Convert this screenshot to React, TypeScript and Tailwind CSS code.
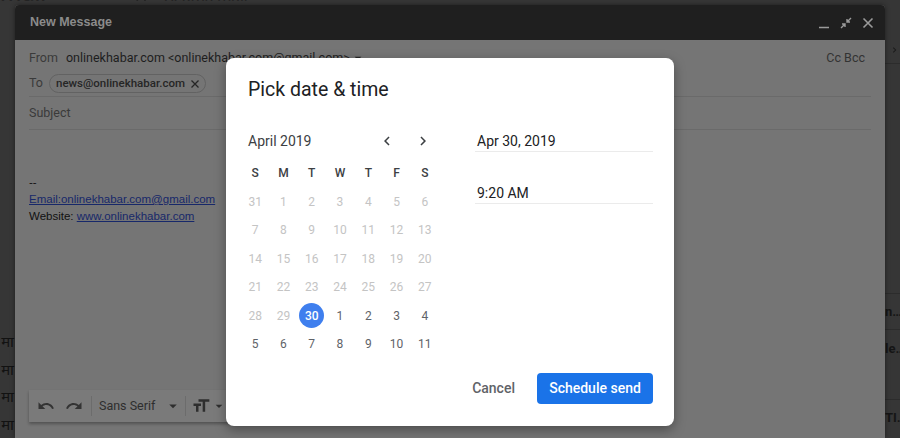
import React from "react";

const Chevron = ({ dir }: { dir: "left" | "right" }) => (
  <svg width="18" height="18" viewBox="0 0 24 24" fill="#3c4043">
    <path
      d={
        dir === "left"
          ? "M15.41 7.41L14 6l-6 6 6 6 1.41-1.41L10.83 12z"
          : "M8.59 16.59L10 18l6-6-6-6-1.41 1.41L13.17 12z"
      }
    />
  </svg>
);

const Caret = ({ size = 18, color = "#2e2e2e" }: { size?: number; color?: string }) => (
  <svg width={size} height={size} viewBox="0 0 24 24" fill={color}>
    <path d="M7 10l5 5 5-5z" />
  </svg>
);

type Day = { n: number; s: "off" | "on" | "sel" };

const rows: Day[][] = [
  [31, 1, 2, 3, 4, 5, 6].map((n) => ({ n, s: "off" as const })),
  [7, 8, 9, 10, 11, 12, 13].map((n) => ({ n, s: "off" as const })),
  [14, 15, 16, 17, 18, 19, 20].map((n) => ({ n, s: "off" as const })),
  [21, 22, 23, 24, 25, 26, 27].map((n) => ({ n, s: "off" as const })),
  [
    { n: 28, s: "off" },
    { n: 29, s: "off" },
    { n: 30, s: "sel" },
    { n: 1, s: "on" },
    { n: 2, s: "on" },
    { n: 3, s: "on" },
    { n: 4, s: "on" },
  ],
  [5, 6, 7, 8, 9, 10, 11].map((n) => ({ n, s: "on" as const })),
];

const weekdays = ["S", "M", "T", "W", "T", "F", "S"];

export default function App() {
  return (
    <div className="relative w-[900px] h-[438px] overflow-hidden bg-[#363636] font-['Roboto',sans-serif]">
      {/* Gmail page behind (dimmed) */}
      <div className="absolute inset-0 flex flex-col">
        <div className="h-[5px] flex items-end overflow-hidden text-[#242424]">
          <span className="ml-[-16px] text-[24px] leading-[24px] mb-[-4px]">Gmail</span>
          <svg className="ml-[88px] mb-[-9px]" width="18" height="18" viewBox="0 0 24 24" fill="#242424">
            <path d="M15.5 14h-.79l-.28-.27A6.471 6.471 0 0016 9.5 6.5 6.5 0 109.5 16c1.61 0 3.09-.59 4.23-1.57l.27.28v.79l5 4.99L20.49 19l-4.99-5zm-6 0C7.01 14 5 11.99 5 9.5S7.01 5 9.5 5 14 7.01 14 9.5 11.99 14 9.5 14z" />
          </svg>
          <span className="ml-[12px] text-[16px] leading-[16px] mb-[-5px]">Search mail</span>
        </div>
        <div className="flex-1 flex justify-between">
          <div className="w-[15px] flex flex-col overflow-hidden">
            <div className="h-[326px]" />
            {["मा", "मा", "मा", "मा"].map((t, i) => (
              <div key={i} className="h-[27.7px] flex items-center justify-end text-[15px] text-[#121212] font-['Noto_Sans','Noto_Sans_Devanagari',serif] whitespace-nowrap">
                <span className="mr-[1px]">{t}</span>
              </div>
            ))}
          </div>
          <div className="w-[15px] flex flex-col overflow-hidden text-[#151515] text-[13px] font-bold">
            <div className="h-[35px]" />
            <div className="h-[27px] flex items-center">
              <svg width="12" height="12" viewBox="0 0 24 24" fill="#1a1a1a" className="ml-[4px]">
                <path d="M8.59 16.59L10 18l6-6-6-6-1.41 1.41L13.17 12z" />
              </svg>
            </div>
            <div className="h-[230px] border-t border-[#2c2c2c]" />
            <div className="h-[36px] border-t border-[#2c2c2c] flex items-center whitespace-nowrap">n…</div>
            <div className="h-[70px] border-t border-[#2c2c2c] whitespace-nowrap">
              <div className="h-[36px] flex items-center">le…</div>
            </div>
            <div className="flex-1 border-t border-[#2c2c2c] whitespace-nowrap">
              <div className="h-[34px] flex items-center">TI…</div>
            </div>
          </div>
        </div>
      </div>

      {/* Compose window */}
      <div className="absolute left-[15px] top-[5px] w-[870px] h-[433px] flex flex-col bg-[#757575] rounded-t-[4px] shadow-[0_0_5px_rgba(0,0,0,0.45)] overflow-hidden">
        <div className="h-[35px] bg-[#1f1f1f] flex items-center justify-between pl-[15px] pr-[10px]">
          <span className="text-[12.5px] font-bold text-[#8b8b8b] font-['Liberation_Sans',sans-serif]">New Message</span>
          <div className="flex items-center gap-[8px]">
            <svg width="14" height="14" viewBox="0 0 14 14" stroke="#9a9a9a" strokeWidth="1.6">
              <path d="M2 11.5h10" />
            </svg>
            <svg width="14" height="14" viewBox="0 0 14 14" stroke="#9a9a9a" strokeWidth="1.4" fill="none">
              <path d="M12 2L8 6M8 3v3h3M2 12l4-4M3 8h3v3" />
            </svg>
            <svg width="14" height="14" viewBox="0 0 14 14" stroke="#9a9a9a" strokeWidth="1.6">
              <path d="M2.5 2.5l9 9M11.5 2.5l-9 9" />
            </svg>
          </div>
        </div>
        <div className="flex-1 flex flex-col pt-[5px]">
          <div className="h-[26px] flex items-center px-[14px] text-[12.5px]">
            <span className="text-[#3a3a3a]">From</span>
            <span className="ml-[8px] text-[#1e1e1e]">onlinekhabar.com &lt;onlinekhabar.com@gmail.com&gt;</span>
            <Caret size={16} color="#262626" />
            <span className="ml-auto mr-[6px] text-[#333]">Cc Bcc</span>
          </div>
          <div className="h-[26px] mx-[14px] flex items-center border-b border-[#6a6a6a]">
            <span className="text-[12.5px] text-[#3a3a3a]">To</span>
            <span className="ml-[6px] h-[19px] flex items-center rounded-full border border-[#626262] pl-[6px] pr-[4px] text-[11.5px] font-medium text-[#262626]">
              news@onlinekhabar.com
              <svg className="ml-[4px]" width="12" height="12" viewBox="0 0 12 12" stroke="#262626" strokeWidth="1.3">
                <path d="M2.5 2.5l7 7M9.5 2.5l-7 7" />
              </svg>
            </span>
          </div>
          <div className="h-[33px] mx-[14px] flex items-center border-b border-[#6a6a6a] text-[12.5px] text-[#3a3a3a]">
            Subject
          </div>
          <div className="mt-[44px] px-[14px] font-['Liberation_Sans',sans-serif] text-[11.5px] leading-[17px] text-[#111]">
            <div>--</div>
            <div className="text-[#17286a] underline">Email:onlinekhabar.com@gmail.com</div>
            <div>
              Website: <span className="text-[#17286a] underline">www.onlinekhabar.com</span>
            </div>
          </div>
          <div className="flex-1" />
          <div className="mb-[16px] ml-[14px] w-[430px] h-[32px] bg-[#7a7a7a] shadow-[0_2px_3px_rgba(0,0,0,0.3)] flex items-center pl-[3px] text-[#2e2e2e]">
            <button className="w-[28px] h-[28px] flex items-center justify-center">
              <svg width="18" height="18" viewBox="0 0 24 24" fill="#333">
                <path d="M12.5 8c-2.65 0-5.05.99-6.9 2.6L2 7v9h9l-3.62-3.62c1.39-1.16 3.16-1.88 5.12-1.88 3.54 0 6.55 2.31 7.6 5.5l2.37-.78C21.08 11.03 17.15 8 12.5 8z" />
              </svg>
            </button>
            <button className="w-[28px] h-[28px] flex items-center justify-center">
              <svg width="18" height="18" viewBox="0 0 24 24" fill="#333">
                <path d="M18.4 10.6C16.55 8.99 14.15 8 11.5 8c-4.65 0-8.58 3.03-9.96 7.22L3.9 16c1.05-3.19 4.05-5.5 7.6-5.5 1.95 0 3.73.72 5.12 1.88L13 16h9V7l-3.6 3.6z" />
              </svg>
            </button>
            <div className="w-px h-[20px] bg-[#6c6c6c] ml-[3px]" />
            <span className="ml-[7px] text-[12.5px]">Sans Serif</span>
            <span className="ml-[9px]"><Caret size={18} color="#2e2e2e" /></span>
            <div className="w-px h-[20px] bg-[#6c6c6c] ml-[3px]" />
            <svg className="ml-[5px]" width="20" height="20" viewBox="0 0 24 24" fill="#2e2e2e">
              <path d="M9 4v3h5v12h3V7h5V4H9zm-6 8h3v7h3v-7h3V9H3v3z" />
            </svg>
            <Caret size={16} color="#2e2e2e" />
          </div>
        </div>
      </div>

      {/* Dialog */}
      <div className="absolute left-[226px] top-[58px] w-[448px] h-[368px] bg-white rounded-[8px] shadow-[0_4px_12px_rgba(0,0,0,0.35)] flex flex-col pl-[22px] pr-[21px] pt-[18px] pb-[22px]">
        <div className="h-[28px] text-[19.5px] leading-[28px] text-[#202124]">Pick date &amp; time</div>
        <div className="mt-[25px] flex">
          <div className="ml-[-7px] w-[198px] flex flex-col">
            <div className="h-[24px] flex items-center justify-between pl-[7px] pr-[2px]">
              <span className="text-[14px] text-[#3c4043]">April 2019</span>
              <div className="flex gap-[8px]">
                <button className="w-[28px] h-[24px] flex items-center justify-center"><Chevron dir="left" /></button>
                <button className="w-[28px] h-[24px] flex items-center justify-center"><Chevron dir="right" /></button>
              </div>
            </div>
            <div className="mt-[6px] grid grid-cols-7">
              {weekdays.map((w, i) => (
                <div key={i} className="h-[28.5px] flex items-center justify-center text-[12px] font-medium text-[#3c4043]">
                  {w}
                </div>
              ))}
              {rows.flat().map((d, i) => (
                <div key={i} className="h-[28.5px] flex items-center justify-center">
                  {d.s === "sel" ? (
                    <span className="w-[25px] h-[25px] rounded-full bg-[#3f7fee] text-white text-[12px] font-medium flex items-center justify-center">
                      {d.n}
                    </span>
                  ) : (
                    <span className={d.s === "on" ? "text-[12px] text-[#5f6368]" : "text-[12px] text-[#c4c4c4]"}>{d.n}</span>
                  )}
                </div>
              ))}
            </div>
          </div>
          <div className="ml-auto w-[178px] flex flex-col">
            <div className="pt-[2px] pl-[2px] leading-[20px] text-[14px] text-[#202124] border-b border-[#ebebeb]">Apr 30, 2019</div>
            <div className="mt-[31px] pl-[2px] leading-[20px] text-[14px] text-[#202124] border-b border-[#ebebeb]">9:20 AM</div>
          </div>
        </div>
        <div className="flex-1" />
        <div className="flex items-center justify-end gap-[14px]">
          <button className="h-[31px] px-[8px] text-[14px] font-medium text-[#5f6368]">Cancel</button>
          <button className="w-[116px] h-[31px] rounded-[4px] bg-[#1a73e8] text-white text-[14px] font-medium">Schedule send</button>
        </div>
      </div>
    </div>
  );
}
